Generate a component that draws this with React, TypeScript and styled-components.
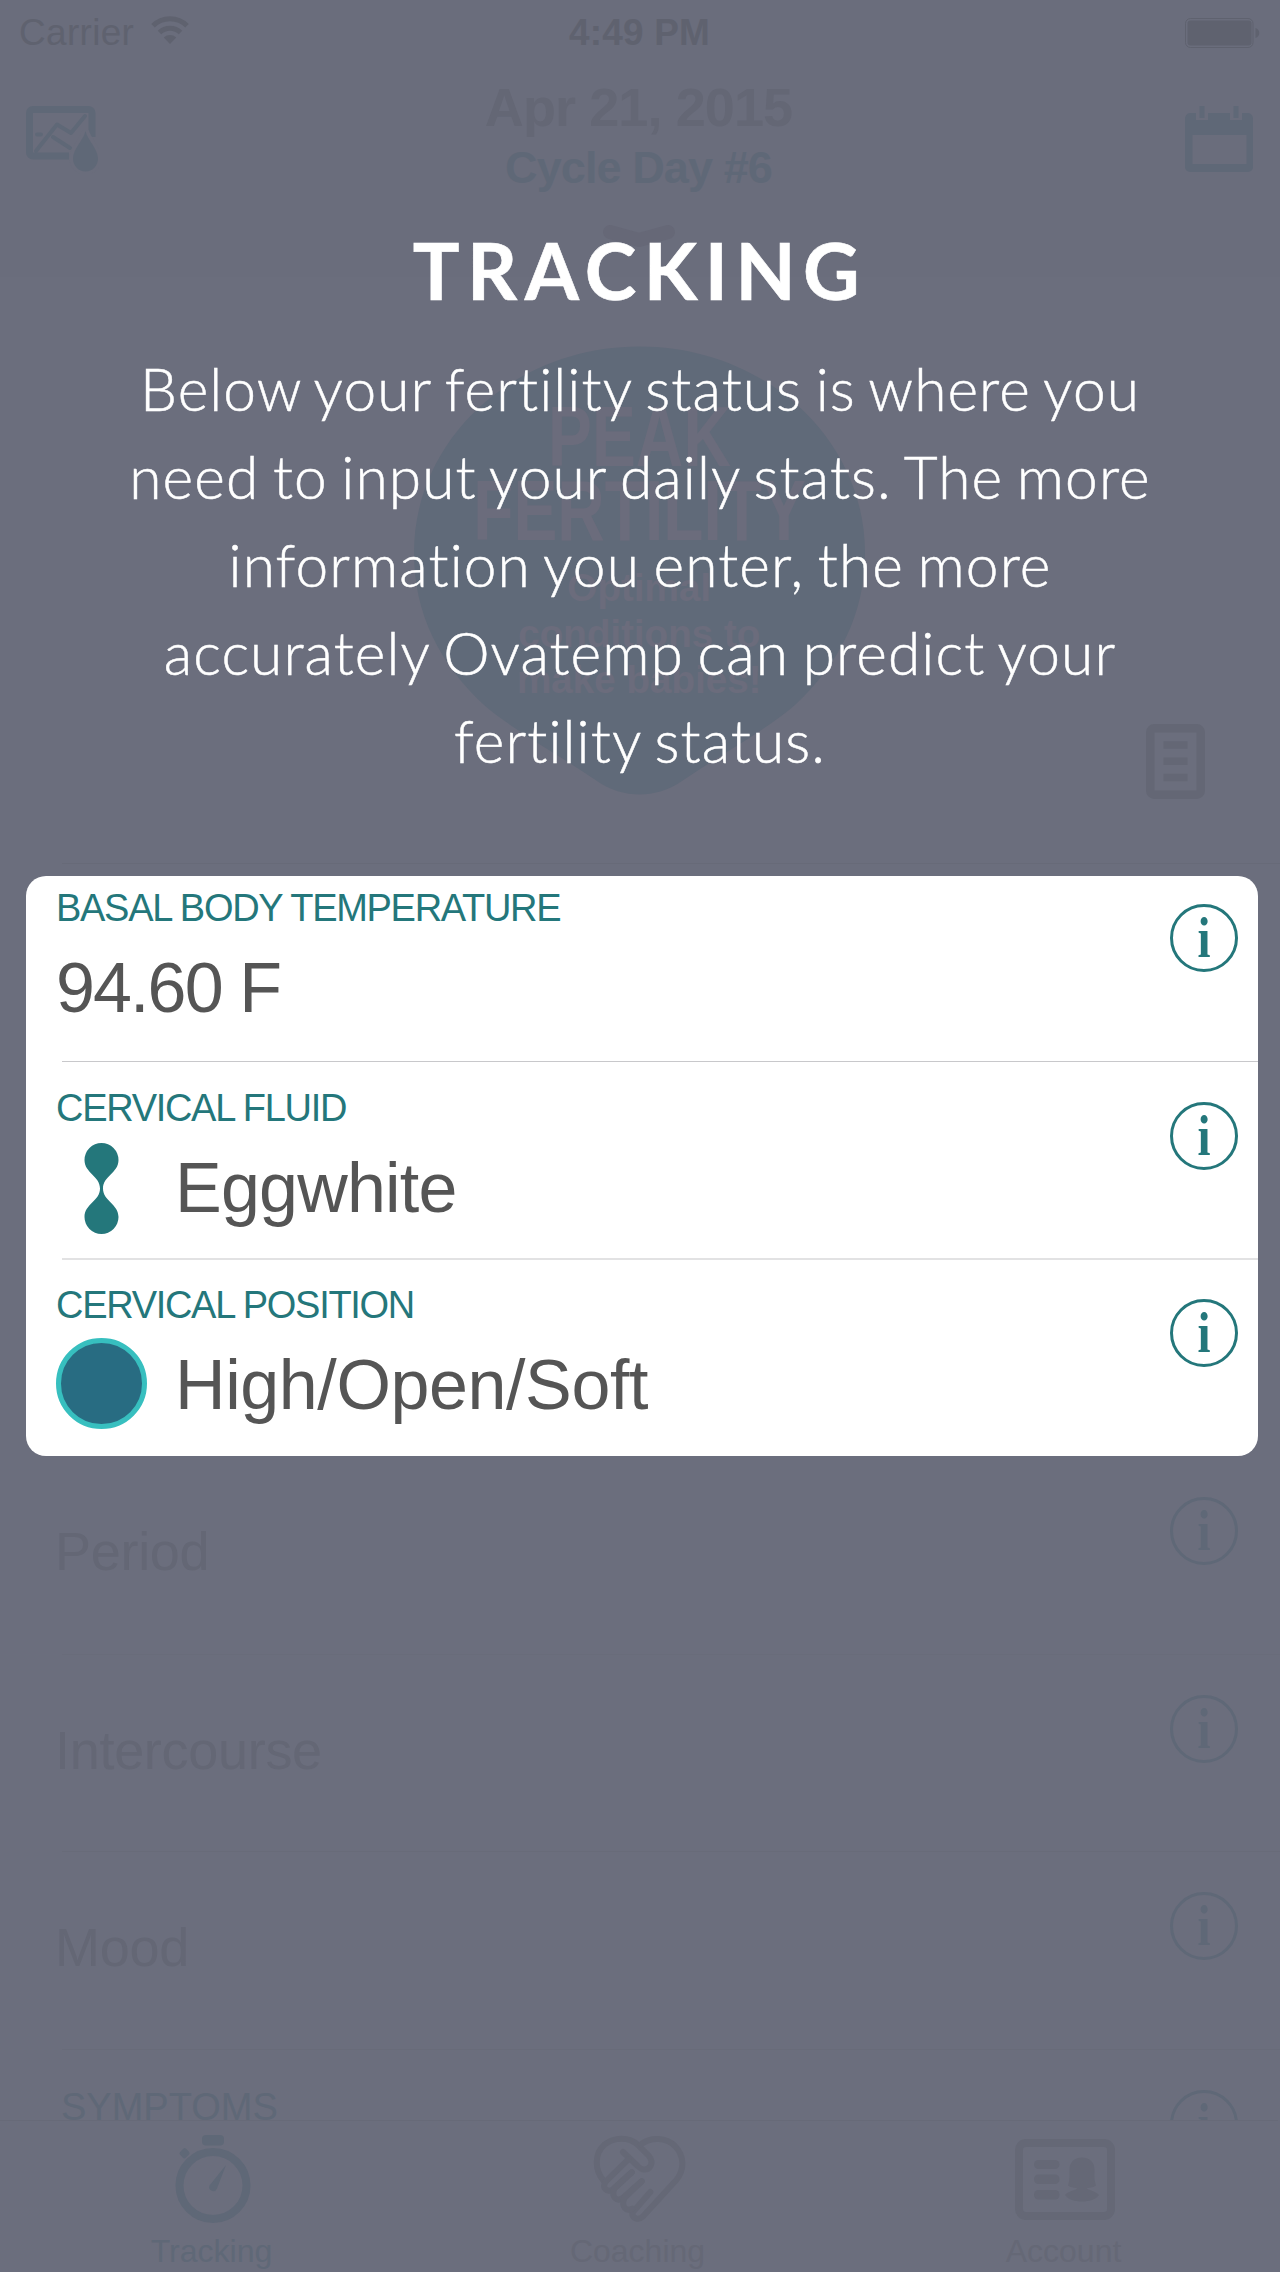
import React from "react";
import styled, { createGlobalStyle } from "styled-components";

const color = {
  backdrop: "#6b6e7d",
  dimText: "#646775",
  dimStatus: "#5f626f",
  dimTeal: "#5f6877",
  dimTab: "#656876",
  dimLine: "#676a78",
  teal: "#24777b",
  value: "#555555",
};

const GlobalStyle = createGlobalStyle`
  *, *::before, *::after { box-sizing: border-box; }
  body { margin: 0; background: ${color.backdrop}; }
`;

const Screen = styled.div`
  position: relative;
  display: flex;
  flex-direction: column;
  width: 1280px;
  height: 2272px;
  overflow: hidden;
  background: ${color.backdrop};
  font-family: "Liberation Sans", Arial, sans-serif;
`;

const Top = styled.header`
  height: 277px;
  flex: none;
  background: #6a6d7c;
`;

const StatusBar = styled.div`
  display: grid;
  grid-template-columns: 1fr auto 1fr;
  align-items: center;
  height: 64px;
  padding: 1px 20px 0 19px;
  color: ${color.dimStatus};
  font-size: 37px;
  line-height: 63px;
`;

const Carrier = styled.div`
  display: flex;
  align-items: center;
  gap: 17px;
  letter-spacing: 0.3px;
  svg { margin-bottom: 5px; }
`;

const Clock = styled.div`
  font-weight: 700;
  letter-spacing: 0.2px;
`;

const Battery = styled.div`
  display: flex;
  justify-content: flex-end;
`;

const NavBar = styled.div`
  display: flex;
  justify-content: space-between;
  width: 1278px;
  padding: 0 24px 0 25px;
  color: ${color.dimTeal};
  > svg { margin-top: 42px; }
`;

const Heading = styled.div`
  display: flex;
  flex-direction: column;
  align-items: center;
  margin-right: 6px;
  padding-top: 13px;
  font-weight: 700;
`;

const DateText = styled.div`
  color: ${color.dimText};
  font-size: 54px;
  line-height: 60px;
  letter-spacing: -0.9px;
`;

const CycleText = styled.div`
  margin: 3px 0 26px;
  font-size: 45px;
  line-height: 56px;
  letter-spacing: -0.9px;
`;

const Hero = styled.section`
  display: grid;
  grid-template-columns: 1fr 451px 1fr;
  flex: none;
  width: 1278px;
  height: 586px;
  padding-top: 69px;
  color: ${color.dimText};
  > svg {
    grid-column: 3;
    align-self: end;
    justify-self: end;
    margin: 0 73px 64px 0;
  }
`;

const Drop = styled.div`
  position: relative;
  grid-column: 2;
  height: 450px;
  padding-top: 53px;
  color: #6b6c7c;
  text-align: center;
  font-weight: 700;
`;

const DropShape = styled.svg`
  position: absolute;
  inset: 0;
`;

const Status = styled.div`
  position: relative;
  font-size: 86px;
  line-height: 74px;
  transform: scaleX(0.765);
`;

const StatusNote = styled.div`
  position: relative;
  margin-top: 18px;
  font-size: 39px;
  line-height: 46px;
  letter-spacing: -0.2px;
`;

const Divider = styled.div<{ $inset: number; $thick?: number; $tone?: string }>`
  flex: none;
  height: ${(p) => p.$thick ?? 1}px;
  margin-left: ${(p) => p.$inset}px;
  background: ${(p) => p.$tone ?? color.dimLine};
`;

const Card = styled.section`
  flex: none;
  height: 580px;
  margin: 12px 22px 0 26px;
  border-radius: 20px;
  overflow: hidden;
  background: #ffffff;
  color: ${color.value};
`;

const CardRow = styled.div<{ $height: number; $top: number }>`
  display: flex;
  justify-content: space-between;
  height: ${(p) => p.$height}px;
  padding: ${(p) => p.$top}px 20px 0 30px;
`;

const Label = styled.div`
  color: ${color.teal};
  font-size: 38px;
  line-height: 46px;
  letter-spacing: -1.3px;
`;

const Value = styled.div<{ $tracking: number; $gap?: number }>`
  display: flex;
  align-items: center;
  gap: 28px;
  height: 80px;
  margin-top: ${(p) => p.$gap ?? 17}px;
  font-size: 70px;
  line-height: 80px;
  letter-spacing: ${(p) => p.$tracking}px;
  svg { flex: none; }
`;

const InfoButton = styled.button<{ $top: number; $dim?: boolean }>`
  flex: none;
  width: 68px;
  height: 68px;
  margin: ${(p) => p.$top}px 0 0;
  padding: 0;
  border: 3px solid currentColor;
  border-radius: 50%;
  background: none;
  color: ${(p) => (p.$dim ? color.dimTeal : color.teal)};
  font: 700 57px/60px "Liberation Serif", serif;
  span {
    display: block;
    transform: scaleX(0.82);
  }
`;

const ListRow = styled.div<{ $height: number }>`
  display: flex;
  flex: none;
  justify-content: space-between;
  height: ${(p) => p.$height}px;
  padding: 0 42px 0 55px;
  overflow: hidden;
`;

const RowText = styled.div`
  padding-top: 65px;
  color: ${color.dimText};
  font-size: 54px;
  line-height: 60px;
  letter-spacing: -0.3px;
`;

const SectionText = styled.div`
  padding: 34px 0 0 6px;
  color: ${color.dimTeal};
  font-size: 38px;
  line-height: 46px;
`;

const TabBar = styled.nav`
  display: grid;
  grid-template-columns: repeat(3, 1fr);
  flex: none;
  width: 1278px;
  height: 152px;
  border-top: 1px solid ${color.dimLine};
`;

const Tab = styled.div<{ $active?: boolean }>`
  display: flex;
  flex-direction: column;
  align-items: center;
  padding-top: 12px;
  color: ${(p) => (p.$active ? color.dimTeal : color.dimTab)};
  font-size: 32px;
  line-height: 40px;
  span { margin: 6px 3px 0 0; }
`;

const Coach = styled.div`
  position: absolute;
  inset: 225px 0 auto;
  display: flex;
  flex-direction: column;
  align-items: center;
  color: #ffffff;
  font-family: Lato, sans-serif;
  text-align: center;
`;

const CoachTitle = styled.h1`
  margin: 0 0 29px;
  font-size: 78px;
  font-weight: 700;
  line-height: 90px;
  letter-spacing: 7.5px;
  -webkit-text-stroke: 0.6px #ffffff;
`;

const CoachBody = styled.p`
  width: 1040px;
  margin: 0;
  font-size: 58.6px;
  font-weight: 300;
  line-height: 88px;
  letter-spacing: 1.1px;
  word-spacing: -3.4px;
  -webkit-text-stroke: 0.5px #ffffff;
`;

const WifiIcon = () => (
  <svg width="38" height="28" viewBox="0 0 38 28" fill="none" stroke="currentColor" strokeWidth="5">
    <path d="M2 9.8a24 24 0 0 1 34 0" />
    <path d="M8.5 16.5a15 15 0 0 1 21 0" />
    <path d="M19 28l-6.200-6.500a9 9 0 0 1 12.400 0z" fill="currentColor" stroke="none" />
  </svg>
);

const BatteryIcon = () => (
  <svg width="75" height="30" viewBox="0 0 75 30">
    <rect x="0.500" y="0.500" width="67.500" height="29" rx="5" fill="none" stroke="currentColor" />
    <rect x="2.500" y="2.500" width="64" height="25" rx="3" fill="currentColor" />
    <path d="M70.500 10c5 1.500 5 8.500 0 10z" fill="currentColor" />
  </svg>
);

const ChartIcon = () => (
  <svg width="74" height="68" viewBox="0 0 74 68" fill="none" stroke="currentColor">
    <path d="M44 50H8a3.500 3.500 0 0 1-3.500-3.500V7A3.500 3.500 0 0 1 8 3.500h55.500A3.500 3.500 0 0 1 67 7v24" strokeWidth="7" />
    <path d="M11 45L32 18.500l14 8.500L60 10" strokeWidth="4" strokeLinecap="round" strokeLinejoin="round" />
    <path d="M28 31l17 11M12 28.500h4" strokeWidth="4" strokeLinecap="round" />
    <path d="M60.500 25c2 9 12.500 18 12.500 27.500a12.500 13 0 0 1-25 0C48 43 58.500 34 60.500 25z" fill="currentColor" stroke="#6a6d7c" strokeWidth="7" paintOrder="stroke" />
  </svg>
);

const CalendarIcon = () => (
  <svg width="70" height="66" viewBox="0 0 70 66" fill="currentColor">
    <path fillRule="evenodd" d="M6 7h6v7h12V7h22v7h12V7h6a5.500 5.500 0 0 1 5 6v48a5 5 0 0 1-5 5H6a5 5 0 0 1-5-5V13a5.500 5.500 0 0 1 5-6zM8.500 29v29h54V29z" />
    <rect x="15.500" y="0" width="5" height="12" />
    <rect x="49.500" y="0" width="5" height="12" />
  </svg>
);

const ChevronIcon = () => (
  <svg width="76" height="28" viewBox="0 0 76 28" fill="none" stroke="#666877" strokeWidth="14" strokeLinecap="round" strokeLinejoin="round">
    <path d="M9 10l29 8 29-8" />
  </svg>
);

const NotesIcon = () => (
  <svg width="59" height="75" viewBox="0 0 59 75" fill="none" stroke="currentColor">
    <rect x="4.250" y="4.250" width="50.500" height="66.500" rx="4" strokeWidth="8.500" />
    <path d="M17.500 21h24M17.500 37.200h24M17.500 53.500h24" strokeWidth="7.500" />
  </svg>
);

const FluidIcon = () => (
  <svg width="91" height="91" viewBox="0 0 91 91" fill={color.teal}>
    <path d="M45.500 0a17 17 0 0 1 17 17c0 13-15.500 16-15.500 28.500S62.500 61 62.500 74a17 17 0 0 1-34 0c0-13 15.500-16 15.500-28.500S28.500 30 28.500 17a17 17 0 0 1 17-17z" />
  </svg>
);

const PositionIcon = () => (
  <svg width="91" height="95" viewBox="0 0 91 95">
    <circle cx="45.500" cy="45.500" r="43" fill="#286c82" stroke="#37bfbf" strokeWidth="5" />
  </svg>
);

const StopwatchIcon = () => (
  <svg width="92" height="92" viewBox="0 0 92 92" fill="currentColor">
    <rect x="35" y="2" width="22" height="10.500" rx="4" />
    <rect x="13.500" y="16" width="8" height="8.500" rx="2" transform="rotate(45 17.500 20.250)" />
    <circle cx="46" cy="52.500" r="33.500" fill="none" stroke="currentColor" strokeWidth="8" />
    <path d="M59 32l-9 23.500a4 4 0 0 1-7.500-3z" />
  </svg>
);

const HeartHandsIcon = () => (
  <svg width="96.670" height="92" viewBox="60 69 290 276" fill="none" stroke="currentColor" strokeWidth="18" strokeLinecap="round" strokeLinejoin="round">
    <path d="M98 212C70 180 70 130 100 104C130 80 175 80 200 104L234 138C250 158 238 182 215 178Q208 176 200 168L156 126" />
    <path d="M210 103C240 80 285 82 312 108C342 140 340 180 316 210L215 320C203 332 183 326 184 308L238 246" />
    <path d="M172 148L104 215C92 232 108 250 126 238L182 187" />
    <path d="M182 187L130 236C120 262 138 276 155 264L212 214" />
    <path d="M212 214L160 264C150 290 165 306 184 296" />
  </svg>
);

const AccountIcon = () => (
  <svg width="100" height="92" viewBox="0 0 100 92" fill="currentColor">
    <rect x="4" y="10" width="92" height="73" rx="7" fill="none" stroke="currentColor" strokeWidth="8" />
    <rect x="19" y="27" width="25.500" height="9" rx="4.500" />
    <rect x="19" y="41.500" width="25.500" height="9.500" rx="4.500" />
    <rect x="19" y="57" width="25.500" height="9.500" rx="4.500" />
    <path d="M67 24.500c8 0 12.500 5 12.500 12 0 6-.5 10 1.500 16-3 2.500-7.500 2-9.500 3 1 1 9 2.500 12.500 6.500-3 4.500-10 6.500-17 6.500s-14-2-17-6.500c3.500-4 11.500-5.500 12.500-6.500-2-1-6.500-.5-9.500-3 2-6 1.500-10 1.500-16 0-7 4.500-12 12.500-12z" />
  </svg>
);

const Info = ({ top, dim }: { top: number; dim?: boolean }) => (
  <InfoButton $top={top} $dim={dim} aria-label="Info"><span>i</span></InfoButton>
);

export default function App() {
  return (
    <>
      <GlobalStyle />
      <Screen>
        <Top>
          <StatusBar>
            <Carrier>Carrier <WifiIcon /></Carrier>
            <Clock>4:49 PM</Clock>
            <Battery><BatteryIcon /></Battery>
          </StatusBar>
          <NavBar>
            <ChartIcon />
            <Heading>
              <DateText>Apr 21, 2015</DateText>
              <CycleText>Cycle Day #6</CycleText>
              <ChevronIcon />
            </Heading>
            <CalendarIcon />
          </NavBar>
        </Top>

        <Hero>
          <Drop>
            <DropShape width="451" height="450" viewBox="0 0 451 450" fill="#606a79">
              <path d="M225.500 .5C350 .5 451 92 451 207C451 268 425 318 381 359C352 384 306 409 268 435C242 453 209 453 183 435C145 409 99 384 70 359C26 318 0 268 0 207C0 92 101 .5 225.500 .5z" />
            </DropShape>
            <Status>PEAK<br />FERTILITY</Status>
            <StatusNote>Optimal<br />conditions to<br />make babies!</StatusNote>
          </Drop>
          <NotesIcon />
        </Hero>
        <Divider $inset={62} />

        <Card>
          <CardRow $height={185} $top={9}>
            <div>
              <Label>BASAL BODY TEMPERATURE</Label>
              <Value $tracking={-1.9}>94.60 F</Value>
            </div>
            <Info top={19} />
          </CardRow>
          <Divider $inset={36} $tone="#c8c8cb" />
          <CardRow $height={196} $top={23}>
            <div>
              <Label>CERVICAL FLUID</Label>
              <Value $tracking={-0.8}><FluidIcon />Eggwhite</Value>
            </div>
            <Info top={17} />
          </CardRow>
          <Divider $inset={36} $thick={2} $tone="#e2e2e3" />
          <CardRow $height={196} $top={22}>
            <div>
              <Label>CERVICAL POSITION</Label>
              <Value $tracking={-0.4}><PositionIcon />High/Open/Soft</Value>
            </div>
            <Info top={17} />
          </CardRow>
        </Card>

        <ListRow $height={198}>
          <RowText>Period</RowText>
          <Info top={41} dim />
        </ListRow>
        <Divider $inset={62} $tone="#696c7a" />
        <ListRow $height={196}>
          <RowText>Intercourse</RowText>
          <Info top={40} dim />
        </ListRow>
        <Divider $inset={62} $tone="#686b79" />
        <ListRow $height={197}>
          <RowText>Mood</RowText>
          <Info top={40} dim />
        </ListRow>
        <Divider $inset={62} $tone="#686b79" />
        <ListRow $height={70}>
          <SectionText>SYMPTOMS</SectionText>
          <Info top={40} dim />
        </ListRow>

        <TabBar>
          <Tab $active><StopwatchIcon /><span>Tracking</span></Tab>
          <Tab><HeartHandsIcon /><span>Coaching</span></Tab>
          <Tab><AccountIcon /><span>Account</span></Tab>
        </TabBar>

        <Coach>
          <CoachTitle>TRACKING</CoachTitle>
          <CoachBody>
            Below your fertility status is where you need to input your daily stats. The more
            information you enter, the more accurately Ovatemp can predict your fertility status.
          </CoachBody>
        </Coach>
      </Screen>
    </>
  );
}
